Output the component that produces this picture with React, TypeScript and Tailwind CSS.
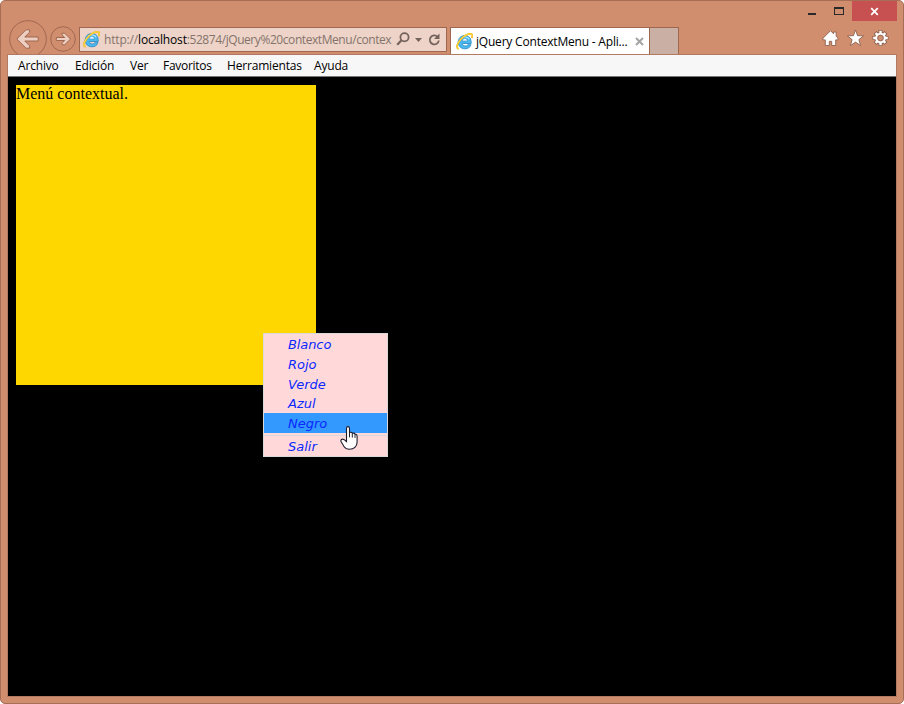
import React from 'react';

const UI = "font-['Open_Sans','Noto_Sans',sans-serif]";

function IELogo() {
  return (
    <svg width="17" height="17" viewBox="0 0 17 17" className="block shrink-0">
      <path d="M15.200 10.500H6.300c.2 1.600 1.400 2.500 2.900 2.500 1.300 0 2.200-.5 2.700-1.300h3.100c-.8 2.600-3.100 4.100-5.900 4.100C5.100 15.800 2.200 13.200 2.200 9.200 2.200 5.200 5.100 2.500 8.900 2.500c4 0 6.600 2.900 6.300 8z" fill="#4bb8ee" stroke="#2487c4" strokeWidth=".8" />
      <path d="M6.300 7.900h5C11.100 6.400 10.200 5.600 8.900 5.600S6.600 6.400 6.300 7.900z" fill="#fff" stroke="#2487c4" strokeWidth=".5" />
      <path d="M4 7.200c.8-2 2.600-3.400 4.800-3.400 2 0 3.600.9 4.400 2.500" fill="none" stroke="#a9e4ff" strokeWidth="1.200" />
      <path d="M2.600 16C-.7 14.600 1.800 8.800 6.400 4.600 10.300 1.100 15 0 16 1.500c.6.900.2 2.300-.4 3.600" fill="none" stroke="#e0a41c" strokeWidth="1.700" />
      <path d="M2.600 16C-.7 14.600 1.800 8.800 6.400 4.600 10.300 1.100 15 0 16 1.500c.6.900.2 2.300-.4 3.600" fill="none" stroke="#ffd83c" strokeWidth="1.200" />
    </svg>
  );
}

function BackButton() {
  return (
    <svg width="38" height="38" viewBox="0 0 38 38" className="mt-[19px] ml-2 block shrink-0">
      <circle cx="19" cy="19" r="18.300" fill="none" stroke="#a0674f" />
      <path d="M7.800 19 17 9.800h3.600v2.400L15.800 17h13.400v4H15.800l4.800 4.800v2.400H17z" fill="#edcfc2" stroke="#a0674f" />
    </svg>
  );
}

function ForwardButton() {
  return (
    <svg width="26" height="26" viewBox="0 0 26 26" className="mt-[25px] ml-[3px] block shrink-0">
      <circle cx="13" cy="13" r="12.300" fill="none" stroke="#a0674f" />
      <path d="M20.500 13 14.700 7.200H12v1.600l2.700 2.700H6.300v3h8.400L12 17.200v1.600h2.700z" fill="#edcfc2" stroke="#a0674f" />
    </svg>
  );
}

function AddressBar() {
  return (
    <div className="mt-[26px] ml-[3px] flex h-[25px] w-[368px] shrink-0 items-center border border-[#a0674f] bg-[#edd3c8]">
      <div className="ml-[3px]"><IELogo /></div>
      <div className="ml-1 w-[288px] shrink-0 whitespace-nowrap text-[12px] leading-[22px] tracking-[-0.17px] text-[#85736b]">
        http://<span className="text-black">localhost</span><span className="tracking-[-0.43px]">:52874/jQuery%20contextMenu/contex</span>
      </div>
      <svg width="53" height="23" viewBox="0 0 53 23" className="block shrink-0" fill="none" stroke="#75635b">
        <circle cx="12.500" cy="9.300" r="4.100" strokeWidth="1.800" />
        <path d="m9.500 12.300-4.300 4.500" strokeWidth="2.200" />
        <path d="M23 10h7l-3.500 4z" fill="#75635b" stroke="none" />
        <path d="M45.500 8.700a4.500 4.500 0 1 0 1.300 3.800" strokeWidth="1.800" />
        <path d="M47.500 5.500v5.500H42z" fill="#75635b" stroke="none" />
      </svg>
    </div>
  );
}

function Tabs() {
  return (
    <div className="mt-[26px] ml-[3px] flex h-[27px] shrink-0">
      <div className="flex w-[200px] items-center border border-b-0 border-[#a0674f] bg-white">
        <div className="ml-[5px]"><IELogo /></div>
        <div className="ml-[3px] w-[159px] pt-px whitespace-nowrap text-[12px] leading-[22px] tracking-[-0.2px] text-black">
          jQuery ContextMenu - Apli...
        </div>
        <svg width="9" height="9" viewBox="0 0 9 9" className="mr-[5px] block shrink-0">
          <path d="m1 1 7 7M8 1 1 8" stroke="#a4a4a4" strokeWidth="2" />
        </svg>
      </div>
      <div className="w-[29px] border border-b-0 border-l-0 border-[#a0674f] bg-[#caafa4]" />
    </div>
  );
}

function WindowControls() {
  return (
    <div className="flex flex-1 flex-col">
      <div className="flex h-5 justify-end pr-[6px]">
        <svg width="50" height="20" viewBox="0 0 50 20" className="block" shapeRendering="crispEdges">
          <path d="M6 12h8v2H6z" fill="#292929" />
          <path d="M32 6h10v8H32zM33 8v5h8V8z" fill="#292929" fillRule="evenodd" />
        </svg>
        <div className="flex h-5 w-[45px] items-center justify-center bg-[#c75050]">
          <svg width="9" height="9" viewBox="0 0 9 9"><path d="m1.200 1.200 6.600 6.600M7.800 1.200 1.200 7.800" stroke="#fff" strokeWidth="1.800" /></svg>
        </div>
      </div>
      <div className="mt-2 flex justify-end gap-2 pr-[14px]">
        <svg width="17" height="18" viewBox="0 0 17 18">
          <path d="M8.500 1.700 1 9.200v1.700h2.300v5.600h4v-4.200h2.400v4.200h4v-5.600H16V9.200l-1.800-1.800V3h-2.700v1.700z" fill="#fff" stroke="#8d6250" strokeWidth=".9" />
        </svg>
        <svg width="17" height="18" viewBox="0 0 17 18">
          <path d="m8.500 1 2.100 5.700 6 .1-4.700 3.800 1.700 6-5.100-3.500-5.100 3.500 1.700-6L.4 6.800l6-.1z" fill="#fff" stroke="#8d6250" strokeWidth=".9" />
        </svg>
        <svg width="17" height="18" viewBox="0 0 17 18">
          <g stroke="#8d6250" strokeWidth="4"><path d="M8.500 1v16M.5 9h16M3 3.500l11 11M14 3.500l-11 11" /></g>
          <circle cx="8.500" cy="9" r="6.200" fill="#8d6250" />
          <g stroke="#fff" strokeWidth="2.400"><path d="M8.500 1.700v14.600M1.200 9h14.600M3.600 4.100l9.800 9.800M13.400 4.100l-9.800 9.800" /></g>
          <circle cx="8.500" cy="9" r="5.300" fill="#fff" />
          <circle cx="8.500" cy="9" r="2.900" fill="#d08e6f" stroke="#8d6250" strokeWidth=".9" />
        </svg>
      </div>
    </div>
  );
}

function MenuBar() {
  return (
    <div className="flex h-[23px] border-t border-b border-t-[#b17a62] border-b-[#777] bg-[#f7f7f7] text-[12px] leading-[22px] tracking-[-0.18px] whitespace-nowrap text-black">
      <span className="ml-[10px] w-[57px]">Archivo</span>
      <span className="w-[55px]">Edición</span>
      <span className="w-[33px]">Ver</span>
      <span className="w-[64px] tracking-[-0.28px]">Favoritos</span>
      <span className="w-[87px] tracking-[-0.18px]">Herramientas</span>
      <span>Ayuda</span>
    </div>
  );
}

function ContextMenu() {
  return (
    <div className="absolute top-[256px] left-[255px] h-[124px] w-[125px] border border-[#d9d9d9] bg-[#ffd9d9] font-['DejaVu_Sans',Verdana,sans-serif] text-[13px] text-[#0a28ff] italic">
      <div className="h-5 pl-6 leading-[22px] tracking-[-0.1px]">Blanco</div>
      <div className="h-5 pl-6 leading-[22px]">Rojo</div>
      <div className="h-5 pl-6 leading-[22px]">Verde</div>
      <div className="h-[19px] pl-6 leading-[20px]">Azul</div>
      <div className="h-5 bg-[#3399ff] pl-6 leading-[22px]">Negro</div>
      <div className="mt-[2px] h-px bg-[#d9d9d9]" />
      <div className="h-5 pl-6 leading-[22px]">Salir</div>
    </div>
  );
}

function Pointer() {
  return (
    <svg width="20" height="26" viewBox="0 0 20 26" className="absolute top-[348px] left-[332px]">
      <path d="M6.500 15.200V3.500Q6.500 1.600 8 1.600t1.500 1.900v3.900q2.400-.5 3 .8 2.200-.4 2.700 1 1.900 0 1.900 1.900v6.200q0 3-2.200 5.100-1.900 1.900-5.400 1.900-3.800 0-5.500-2.800-.9-1.700-2.900-4.700Q.4 14.400 2.300 14.100q1.700-.2 4.200 2.400z" fill="#fff" stroke="#1c1c2c" strokeWidth="1.100" />
      <path d="M9.500 7.300v5M12.300 8.200v4.300M15 9.300v3.500" stroke="#1c1c2c" />
    </svg>
  );
}

export default function App() {
  return (
    <div className={`flex h-[704px] w-[904px] flex-col overflow-hidden bg-white ${UI}`}>
      <div className="flex flex-1 flex-col rounded-[5px] border border-[#a76e56] bg-[#d08e6f]">
        <div className="flex h-[53px] items-start overflow-hidden">
          <BackButton />
          <ForwardButton />
          <AddressBar />
          <Tabs />
          <WindowControls />
        </div>
        <div className="mx-[6px] mb-[6px] flex flex-1 flex-col border-x border-b border-[#b17a62]">
          <MenuBar />
          <div className="relative flex-1 bg-black pt-2 pl-2">
            <div className="h-[300px] w-[300px] bg-[#ffd700] font-['Liberation_Serif','Times_New_Roman',serif] text-[16px] leading-[18px] text-black">
              Menú contextual.
            </div>
            <ContextMenu />
            <Pointer />
          </div>
        </div>
      </div>
    </div>
  );
}
